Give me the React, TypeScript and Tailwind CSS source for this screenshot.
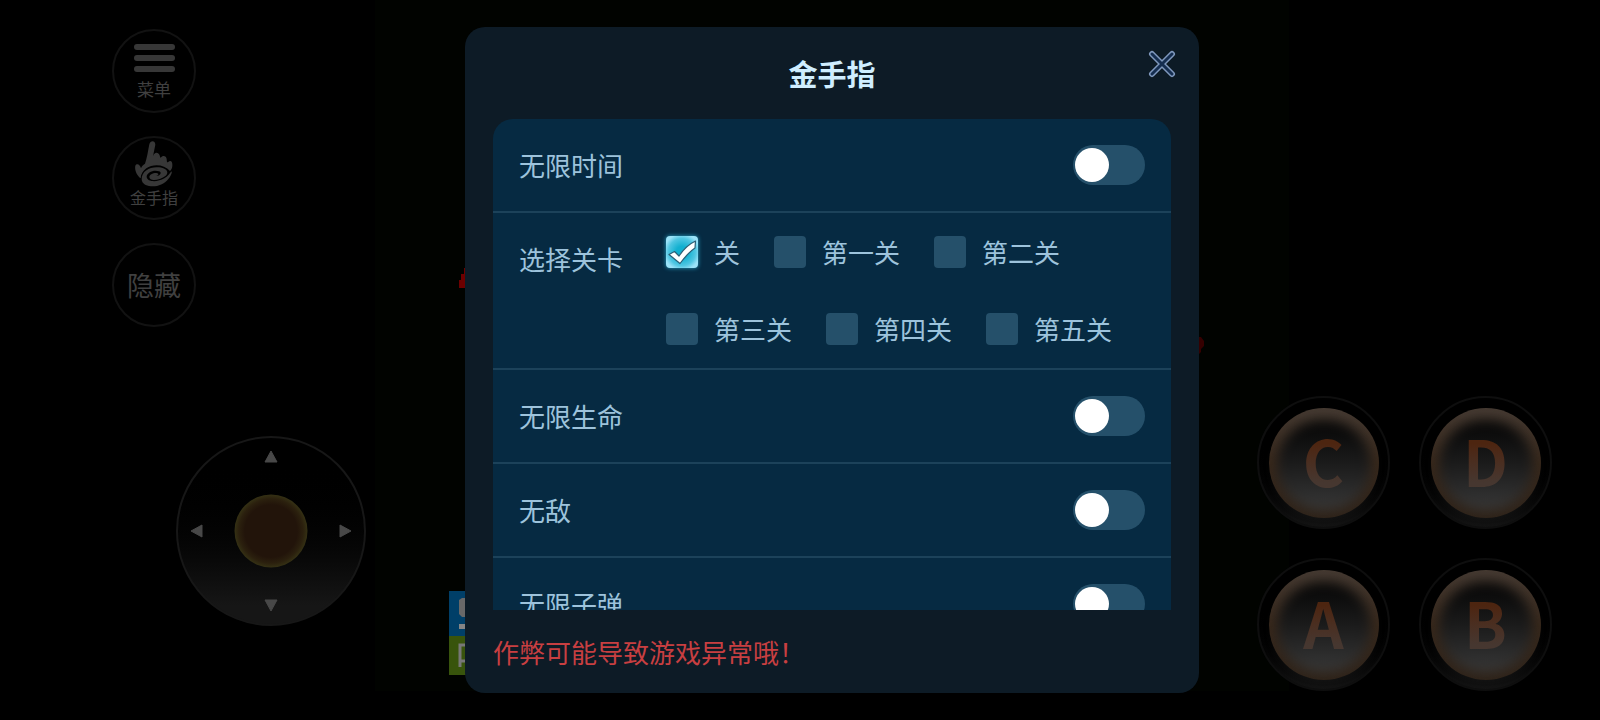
import React, { useState } from 'react';

const cheats = [
  { id: 'time', name: '无限时间' },
  { id: 'level', name: '选择关卡', options: ['关', '第一关', '第二关', '第三关', '第四关', '第五关'] },
  { id: 'life', name: '无限生命' },
  { id: 'god', name: '无敌' },
  { id: 'ammo', name: '无限子弹' },
];

const MenuIcon = () => (
  <svg className="w-[42px] h-[30px]" viewBox="0 0 42 30" fill="#373737">
    <rect x="1" y="1" width="41" height="6" rx="3" />
    <rect x="1" y="12" width="41" height="6" rx="3" />
    <rect x="1" y="23" width="41" height="6" rx="3" />
  </svg>
);

const FingerIcon = () => (
  <svg className="w-[38px] h-[47px]" viewBox="16 1 114 141">
    {/* hand */}
    <path
      fill="#373737"
      d="M46 72 C52 56 55 34 59 14 C62 1 77 2 77 15 L70 50 C73 40 80 36 87 42 C92 47 90 53 93 54 C99 46 110 48 111 58 C112 66 111 68 115 68 C123 60 129 66 128 78 C128 84 125 90 121 94 C104 74 70 72 50 86 C39 94 33 106 33 116 C22 108 14 92 17 78 C21 69 32 74 34 86 C36 80 40 76 46 72 Z"
    />
    {/* swirl */}
    <path
      fill="#373737"
      stroke="#000"
      strokeWidth="5"
      paintOrder="stroke"
      d="M36 118 C36 94 62 80 88 83 C112 86 120 98 106 110 C92 121 70 124 62 118 C54 110 64 100 80 100 C88 101 88 106 80 109 C92 109 98 98 88 95 C72 89 50 99 51 112 C53 128 84 128 104 116 C114 109 120 102 124 96 C130 94 124 108 116 118 C102 136 78 143 58 139 C43 136 36 128 36 118 Z"
    />
  </svg>
);

const CloseIcon = () => (
  <svg className="w-7 h-7" viewBox="0 0 28 28" fill="none" strokeLinecap="round">
    <path d="M4 4L24 24M24 4L4 24" stroke="#7f98bd" strokeWidth="6" />
    <path d="M4 4L24 24M24 4L4 24" stroke="#152e50" strokeWidth="3" />
  </svg>
);

const RoundButton = ({ label, icon, size }: { label: string; icon?: React.ReactNode; size: string }) => (
  <button
    className={`w-[84px] h-[84px] rounded-full border-2 border-[#121212] bg-black text-[#404040] flex flex-col items-center ${size}`}
  >
    {icon}
    <span>{label}</span>
  </button>
);

const DPad = () => (
  <div className="ml-16 w-[190px] h-[190px] rounded-full border-2 border-[#171717] bg-linear-to-b from-black from-10% to-[#161616] to-90%">
    <svg viewBox="0 0 186 186" className="w-full h-full">
      <defs>
        <radialGradient id="stick">
          <stop offset="0.72" stopColor="#22140a" />
          <stop offset="0.88" stopColor="#2b200e" />
          <stop offset="1" stopColor="#353114" />
        </radialGradient>
      </defs>
      <circle cx="93" cy="93" r="36.500" fill="url(#stick)" />
      <g fill="#484848" stroke="#484848" strokeLinejoin="round">
        <path d="M93 13l6 11H87z" />
        <path d="M93 173l6-11H87z" />
        <path d="M13 93l11-6v12z" />
        <path d="M173 93l-11-6v12z" />
      </g>
    </svg>
  </div>
);

const ActionButton = ({ letter }: { letter: string }) => (
  <button className="w-[133px] h-[133px] rounded-full border-2 border-[#0e0e0e] bg-linear-to-b from-black from-30% to-[#131313] flex items-center justify-center">
    <span className="relative w-[110px] h-[110px] rounded-full bg-linear-to-b from-[#453a32] via-[#38281b] to-[#2e2218] flex items-center justify-center">
      <span className="absolute inset-x-2 top-3 bottom-2 rounded-full blur-[6px] bg-linear-to-b from-[#0a0a0a] from-10% via-[#1c1c1c] to-[#383838]" />
      <span className="relative pb-1.5 text-[63px] leading-[92px] font-bold text-transparent bg-clip-text bg-linear-to-b from-[#4d2510] from-30% to-[#463730] to-70%">
        {letter}
      </span>
    </span>
  </button>
);

const GameScene = () => (
  <div className="absolute inset-0 pl-16 pb-[29px] flex justify-center">
    <div className="relative w-[914px] bg-[#010300]">
      {/* enemy sprites */}
      <svg className="absolute left-[84px] top-[268px] w-4 h-5" viewBox="0 0 16 20" fill="#6d0000" shapeRendering="crispEdges">
        <path d="M0 12h2V6h3V0h11v20H0z" />
      </svg>
      <svg className="absolute right-[84px] top-[337px] w-4 h-[18px]" viewBox="0 0 16 18" fill="#350000">
        <path d="M0 0h12l3 4v5l-3 3v3l-3 3H0z" />
      </svg>
      {/* stage badge */}
      <svg className="absolute left-[74px] bottom-4 w-10 h-[84px]" viewBox="0 0 40 84">
        <path fill="#003f68" d="M0 0h40v45H0z" />
        <path fill="#38540c" d="M0 45h40v39H0z" />
        <path fill="#686868" d="M10 9l3-2h20v19H13l-3-3z" />
        <path fill="#858585" d="M10 33h24v5H10z" />
        <path fill="none" stroke="#777" strokeWidth="3" d="M18 54h-7v22M11 70h7" />
      </svg>
    </div>
  </div>
);

const Toggle = ({ id }: { id: string }) => (
  <input
    id={id}
    type="checkbox"
    role="switch"
    className="appearance-none w-[72px] h-10 rounded-full bg-[#25506a] px-[2px] flex items-center before:block before:w-[34px] before:h-[34px] before:rounded-full before:bg-white checked:bg-[#14b4d4] checked:justify-end"
  />
);

const LevelOption = ({ name, checked, onChange }: { name: string; checked: boolean; onChange: () => void }) => (
  <label className="flex items-center gap-4">
    <span className="relative w-8 h-8">
      <input
        type="checkbox"
        checked={checked}
        onChange={onChange}
        className="peer block appearance-none w-8 h-8 rounded-sm bg-[#25506a] checked:bg-[radial-gradient(circle,#12b0d0_25%,#4fc6e2_60%,#9be2f8_80%)] checked:shadow-[0_0_4px_#2aa5c8]"
      />
      <svg className="absolute inset-0 hidden peer-checked:block pointer-events-none" viewBox="0 0 32 32">
        <path
          d="M3 18.500 L8.500 15.500 L13 20 C17 14 22 8.500 29.500 5 L29 12 C23 16 18.500 21.500 14 27.500 Z"
          fill="#fff"
          stroke="#2b5f76"
          strokeWidth="1.200"
          strokeLinejoin="round"
        />
      </svg>
    </span>
    <span>{name}</span>
  </label>
);

export default function App() {
  const [level, setLevel] = useState('关');

  return (
    <div className="relative h-screen bg-black overflow-hidden font-['Noto_Sans_CJK_SC',sans-serif]">
      <GameScene />

      <div className="relative h-full flex justify-between">
        <div className="pl-28 pt-[29px] pb-[94px] flex flex-col justify-between">
          <div className="flex flex-col gap-[23px]">
            <RoundButton label="菜单" icon={<MenuIcon />} size="pt-3 text-[17px] leading-8" />
            <RoundButton label="金手指" icon={<FingerIcon />} size="pt-0.5 text-[16px] leading-5" />
            <RoundButton label="隐藏" size="pt-6 text-[27px] leading-8" />
          </div>
          <DPad />
        </div>
        <div className="self-end pr-12 pb-[29px] grid grid-cols-2 gap-[29px]">
          {['C', 'D', 'A', 'B'].map((letter) => (
            <ActionButton key={letter} letter={letter} />
          ))}
        </div>
      </div>

      {/* Cheat dialog */}
      <div className="absolute inset-0 pl-16 py-[27px] flex justify-center">
        <section className="relative w-full max-w-[734px] px-7 rounded-[20px] bg-[#0d1b26] flex flex-col">
          <h1 className="text-center text-[29px] leading-[92px] font-bold text-[#cfeeff]">金手指</h1>
          <button aria-label="关闭" className="absolute top-[23px] right-[23px]">
            <CloseIcon />
          </button>

          <div className="flex-1 min-h-0 overflow-y-auto [scrollbar-width:none] rounded-t-[20px] bg-[#062a42] text-[26px] leading-8 text-[#9dc3dc]">
            {cheats.map((cheat) => (
              <div key={cheat.id} className="px-[26px] border-b-2 border-[#1c425a] flex justify-between">
                {cheat.options ? (
                  <>
                    <span className="w-[147px] shrink-0 py-[30px]">{cheat.name}</span>
                    <div className="flex-1 py-[23px] flex flex-wrap gap-x-[34px] gap-y-[45px]">
                      {cheat.options.map((option) => (
                        <LevelOption
                          key={option}
                          name={option}
                          checked={option === level}
                          onChange={() => setLevel(option)}
                        />
                      ))}
                    </div>
                  </>
                ) : (
                  <>
                    <label htmlFor={cheat.id} className="py-[30px]">
                      {cheat.name}
                    </label>
                    <div className="flex items-center">
                      <Toggle id={cheat.id} />
                    </div>
                  </>
                )}
              </div>
            ))}
          </div>

          <p className="text-[26px] leading-[83px] text-[#c83f41]">作弊可能导致游戏异常哦！</p>
        </section>
      </div>
    </div>
  );
}
